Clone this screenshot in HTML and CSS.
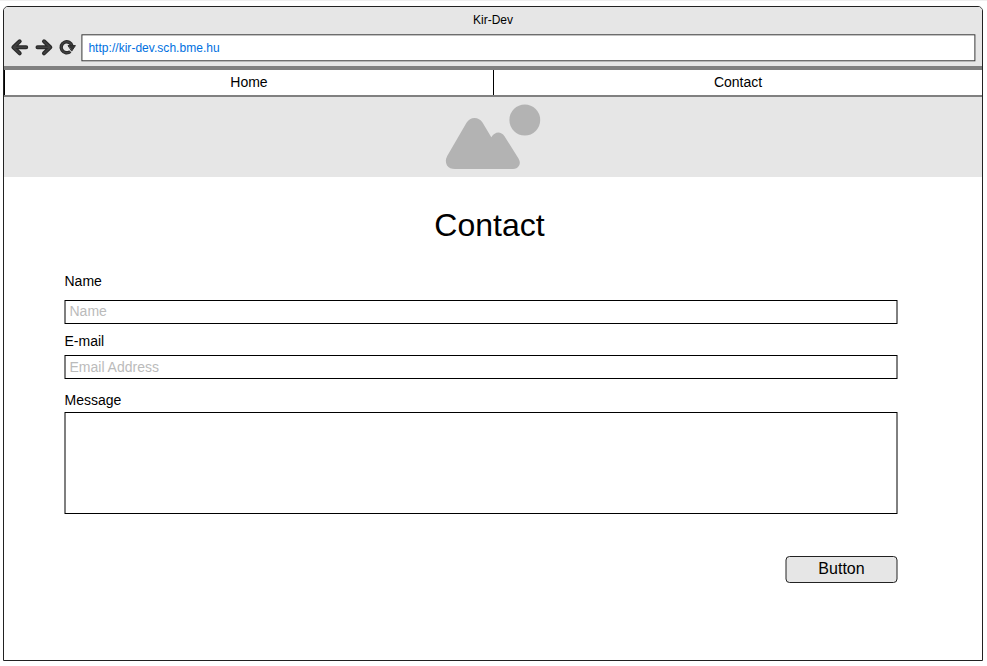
FILE: index.html
```html
<!DOCTYPE html>
<html lang="en">
<head>
<meta charset="utf-8">
<title>Kir-Dev</title>
<link rel="stylesheet" href="styles.css">
</head>
<body>
<div class="window">
  <header class="chrome">
    <div class="title">Kir-Dev</div>
    <div class="toolbar">
      <svg class="controls" width="77" height="28" viewBox="4 33 77 28" fill="none" stroke="#2a2a2a" stroke-linecap="round" stroke-linejoin="round">
        <g stroke-width="4">
          <path d="M19.700 41.300L13.400 47.300L19.700 53.300M14 47.300H26.200"/>
          <path d="M44 41.300L50.300 47.300L44 53.300M49.700 47.300H37.500"/>
        </g>
        <g stroke="#404040" stroke-width="1.600">
          <path d="M19.700 41.300L13.400 47.300L19.700 53.300M14 47.300H26.200"/>
          <path d="M44 41.300L50.300 47.300L44 53.300M49.700 47.300H37.500"/>
        </g>
        <path d="M70.300 51.400A5.500 5.500 0 1 1 72 46" stroke-width="3.400" stroke-linecap="butt"/>
        <path d="M70.300 51.400A5.500 5.500 0 1 1 72 46" stroke="#404040" stroke-width="1.400" stroke-linecap="butt"/>
        <path d="M68.400 45.600H75.400L71.900 50.800Z" fill="#333" stroke-width="1"/>
      </svg>
      <div class="url"><span>http://kir-dev.sch.bme.hu</span></div>
    </div>
  </header>
  <nav class="nav">
    <a class="tab">Home</a>
    <a class="tab">Contact</a>
  </nav>
  <div class="banner">
    <svg width="96" height="68" viewBox="445 103 96 68" fill="#b3b3b3">
      <circle cx="524.800" cy="120" r="15.400"/>
      <path d="M447.200 156L466.500 122.800Q469.500 118 474.500 118Q479.500 118 482.500 122.500L491.300 137.200Q494.500 132.600 498.300 132.600Q501.800 132.600 504.500 136.300L518.500 158.500Q521 163 518.800 166Q517 169 513 169H455Q449.500 169 447 165.500Q444.600 161 447.200 156Z"/>
    </svg>
  </div>
  <main class="content">
    <h1>Contact</h1>
    <form class="form">
      <label class="name-label">Name</label>
      <div class="field name-field">Name</div>
      <label class="mail-label">E-mail</label>
      <div class="field mail-field">Email Address</div>
      <label class="message-label">Message</label>
      <div class="field message-field"></div>
      <div class="button">Button</div>
    </form>
  </main>
</div>
</body>
</html>
```
FILE: styles.css
```css
* { box-sizing: border-box; }
body {
  margin: 0;
  height: 666px;
  padding: 5px 4px 5px 3px;
  border-top: 1px solid #efefef;
  background: #fff;
  color: #000;
  font-family: "Liberation Sans", Arial, sans-serif;
  overflow: hidden;
}
.window {
  display: flex;
  flex-direction: column;
  height: 655px;
  border: 1px solid #222;
  border-radius: 5px 5px 0 0;
}
.chrome {
  height: 63px;
  flex: none;
  background: #e6e6e6;
  border-bottom: 4px solid #808080;
  border-radius: 4px 4px 0 0;
}
.title {
  height: 26px;
  line-height: 26px;
  text-align: center;
  font-size: 12px;
}
.toolbar { display: flex; padding-top: 1px; }
.controls { flex: none; margin-top: -1px; }
.url {
  width: 894px;
  height: 27px;
  padding-left: 6px;
  border: 1px solid #333;
  background: #fff;
  color: #0070e0;
  font-size: 12px;
  letter-spacing: 0.03px;
  line-height: 27px;
  transform: translate(0.4px, 0.3px);
}
.nav {
  display: flex;
  flex: none;
  height: 27px;
  border-bottom: 2px solid #808080;
  font-size: 14px;
}
.tab {
  flex: 1;
  text-align: center;
  line-height: 25px;
  border-left: 1px solid #000;
}
.banner {
  display: flex;
  flex: none;
  height: 80px;
  padding: 6px 0 0 441px;
  background: #e6e6e6;
}
.content { padding: 29px 85px 0 60px; }
h1 {
  margin: 0 0 25px;
  padding-right: 7px;
  font-size: 32px;
  font-weight: 400;
  line-height: 38px;
  text-align: center;
  transform: translateX(12.5px);
}
.form {
  display: flex;
  flex-direction: column;
  font-size: 14px;
  transform: translateX(0.5px);
}
.form label { line-height: 24px; height: 24px; }
.field {
  height: 24px;
  padding-left: 4px;
  border: 1px solid #000;
  line-height: 22px;
  color: #bbb;
}
.name-field { margin-top: 7px; line-height: 20px; }
.mail-label { margin-top: 5px; }
.mail-field { margin-top: 2px; }
.message-label { margin-top: 9px; }
.message-field { height: 102px; }
.button {
  align-self: flex-end;
  width: 112px;
  height: 27px;
  margin-top: 42px;
  border: 1px solid #222;
  border-radius: 4px;
  background: #e6e6e6;
  font-size: 16px;
  line-height: 24px;
  text-align: center;
}
```
